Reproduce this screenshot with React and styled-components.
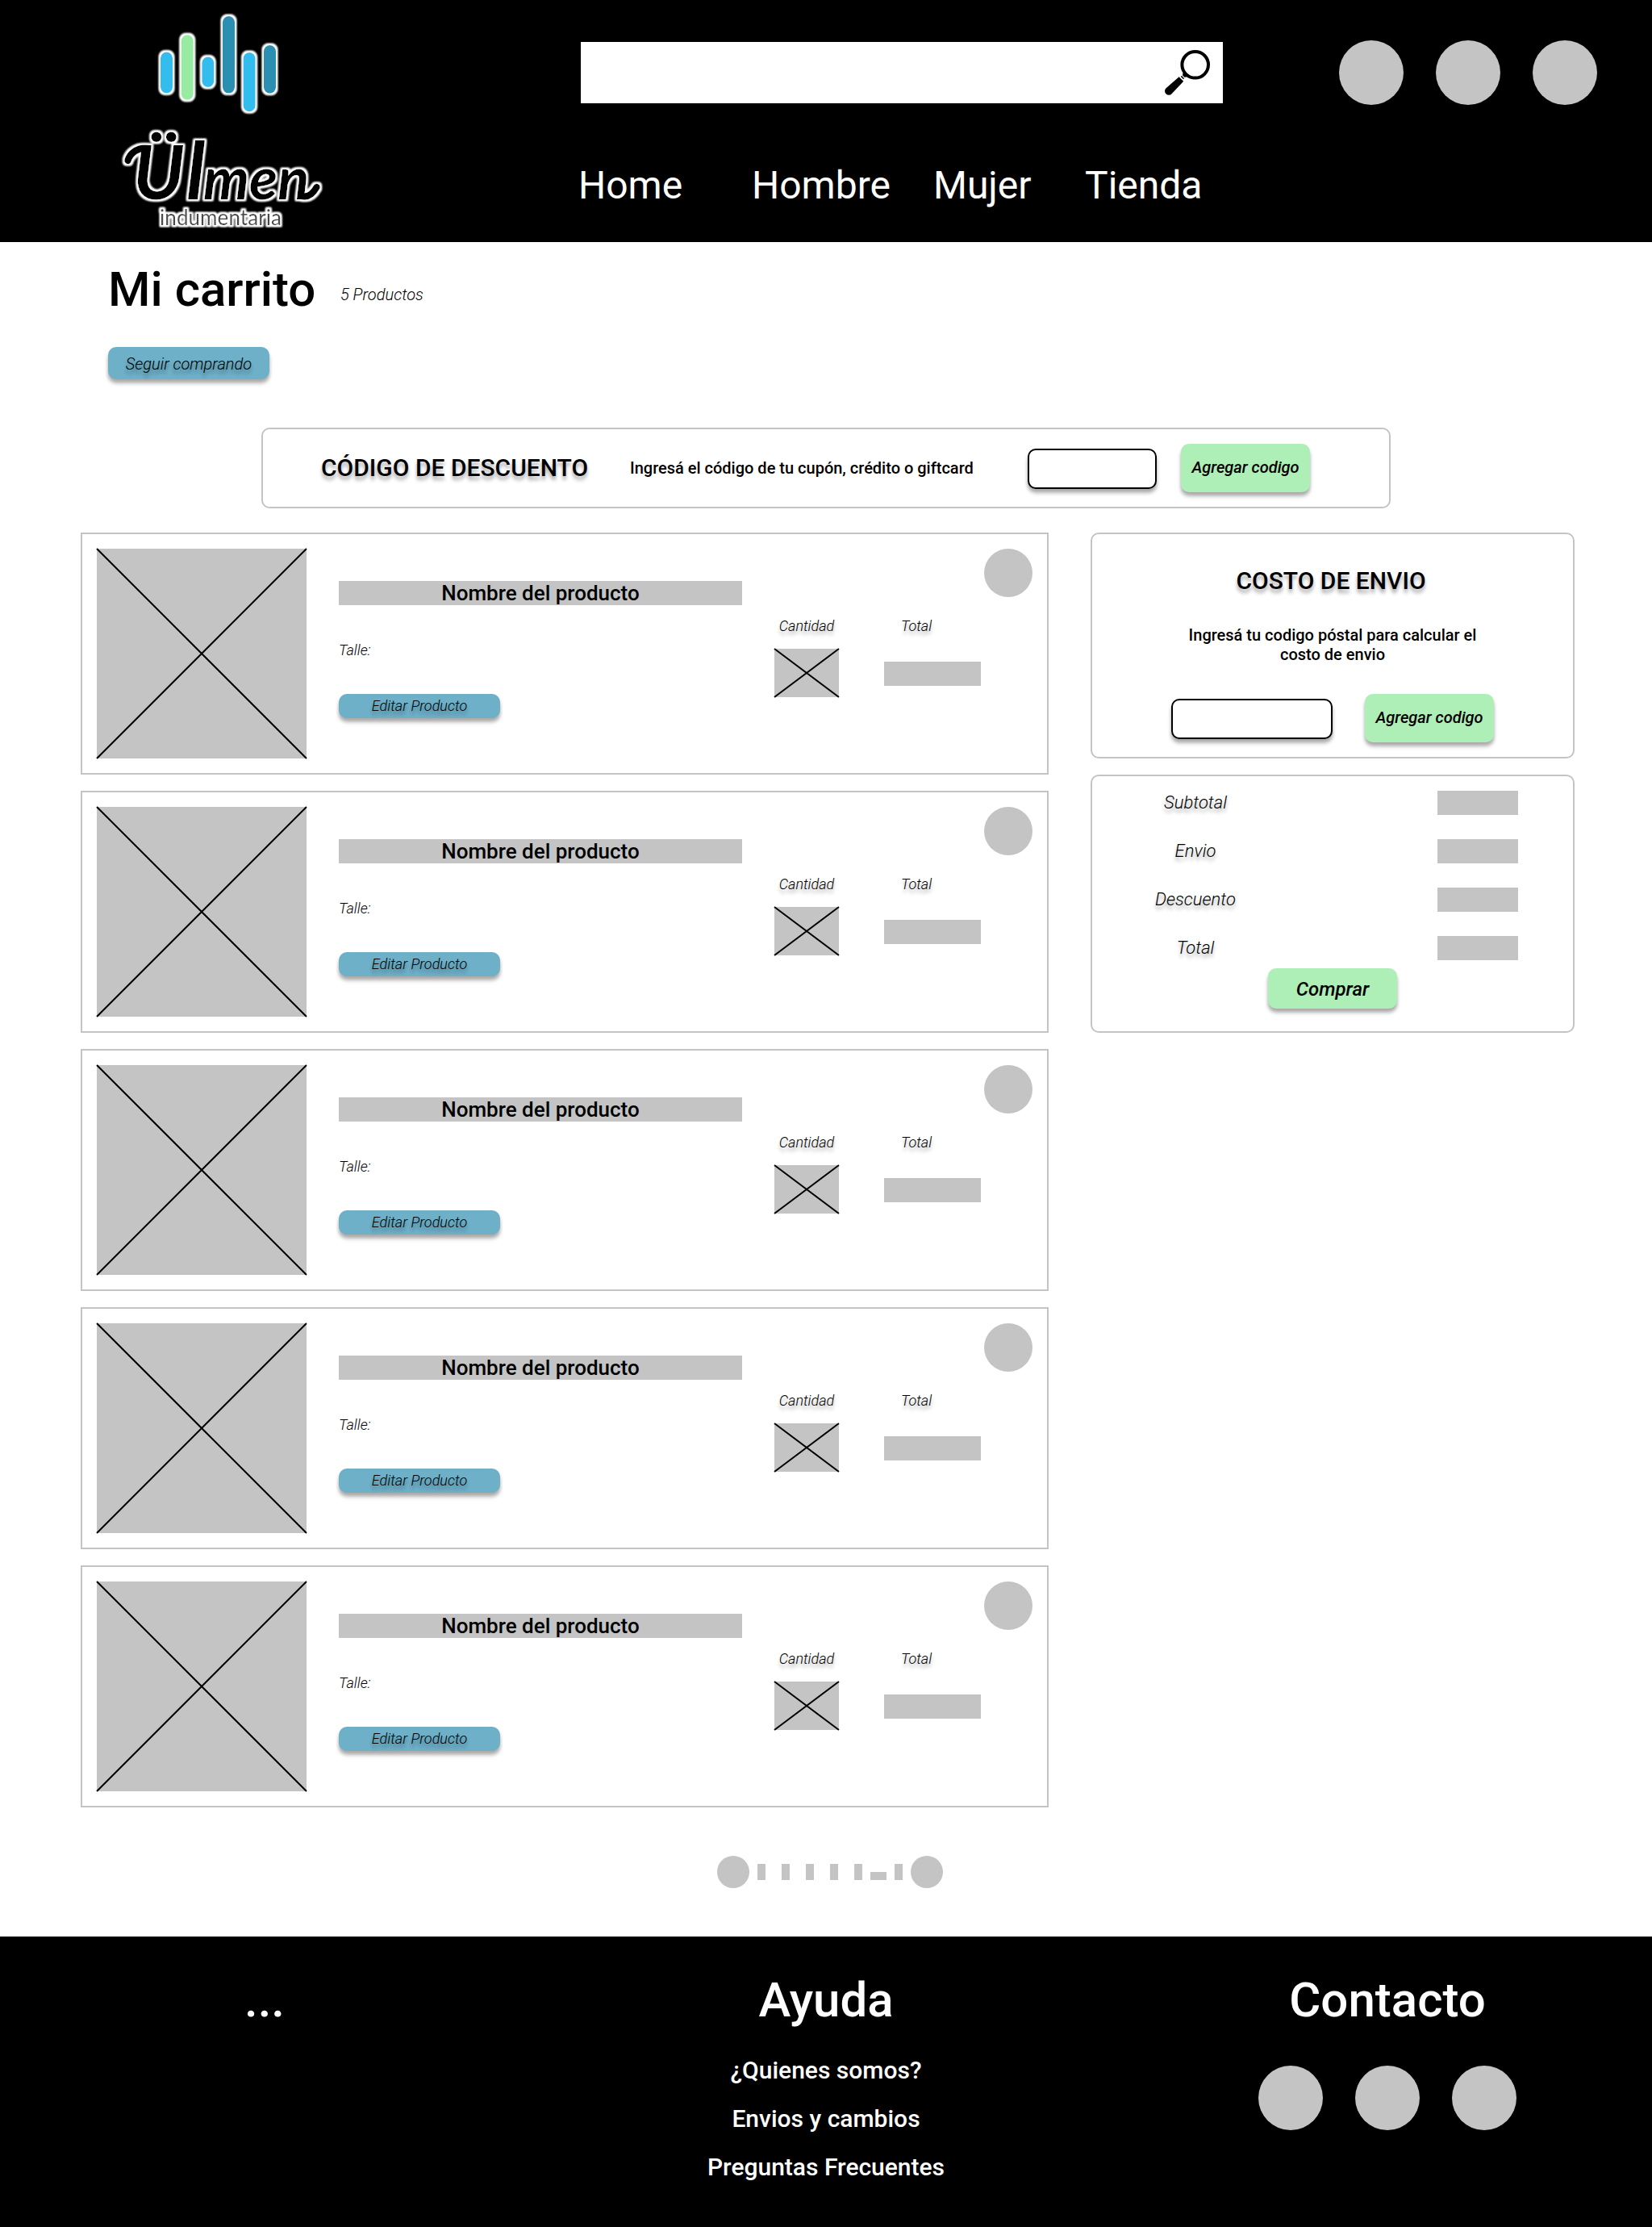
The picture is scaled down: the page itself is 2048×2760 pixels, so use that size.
import React from "react";
import styled, { createGlobalStyle } from "styled-components";

const Global = createGlobalStyle`
  *, *::before, *::after { box-sizing: border-box; }
  body { margin: 0; background: #fff; }
  button, input { font: inherit; color: inherit; border: 0; padding: 0; margin: 0; }
  h1, h2, p { margin: 0; font-weight: inherit; }
`;
const GREY = "#c4c4c4";
const SOFT = "0 4px 4px rgba(0, 0, 0, 0.25), 0 6px 5px rgba(0, 0, 0, 0.12)";

const Page = styled.div`
  width: 2048px;
  height: 2760px;
  display: flex;
  flex-direction: column;
  background: #fff;
  color: #000;
  font-family: Roboto, "Liberation Sans", sans-serif;
`;

const Header = styled.header`
  height: 300px;
  flex: none;
  display: flex;
  align-items: flex-start;
  padding: 0 68px 0 130px;
  background: #000;
  color: #fff;
`;
const HeaderCenter = styled.div`
  margin-left: 286px;
  padding-top: 52px;
  width: 800px;
`;
const SearchBar = styled.div`
  display: flex;
  justify-content: flex-end;
  align-items: center;
  width: 796px;
  height: 76px;
  margin-left: 4px;
  padding-right: 12px;
  background: #fff;
`;
const Nav = styled.nav`
  display: grid;
  grid-template-columns: 215px 225px 188px auto;
  margin: 74px 0 0 1px;
  font-size: 48px;
  line-height: 56px;
`;
const Circles = styled.div`
  display: flex;
  gap: 40px;
  margin-left: ${(p) => (p.$end ? "auto" : "0")};
  padding-top: ${(p) => p.$top}px;
`;
const Circle = styled.span`
  display: block;
  flex: none;
  width: ${(p) => p.$size}px;
  height: ${(p) => p.$size}px;
  border-radius: 50%;
  background: ${GREY};
`;

const Main = styled.main`
  height: 2100px;
  display: flex;
  flex-direction: column;
  padding: 24px 96px 0 100px;
`;
const TitleRow = styled.div`
  display: flex;
  align-items: flex-start;
  height: 70px;
  padding-left: 34px;
`;
const Title = styled.h1`
  width: 288px;
  font-size: 60px;
  line-height: 70px;
  font-weight: 500;
`;
const Count = styled.span`
  margin-top: 30px;
  font-size: 20px;
  line-height: 23px;
  font-weight: 300;
  font-style: italic;
`;
const BlueButton = styled.button`
  display: block;
  flex: none;
  width: 200px;
  height: ${(p) => p.$height}px;
  border-radius: 10px;
  background: #6db0c8;
  box-shadow: ${SOFT};
  font-size: ${(p) => p.$font}px;
  font-weight: 300;
  font-style: italic;
  text-align: center;
  text-shadow: ${SOFT};
`;
const KeepShopping = styled(BlueButton)`
  margin: 36px 0 0 34px;
  padding-top: 2px;
`;
const EditButton = styled(BlueButton)`
  padding-bottom: 1px;
`;
const GreenButton = styled.button`
  flex: none;
  width: 160px;
  height: ${(p) => p.$height}px;
  padding-bottom: 2px;
  border-radius: 10px;
  background: #aeefb7;
  box-shadow: ${SOFT};
  font-size: ${(p) => p.$font}px;
  font-weight: 500;
  font-style: italic;
  text-align: center;
`;
const Field = styled.input`
  flex: none;
  width: ${(p) => p.$width}px;
  height: 50px;
  && { margin-top: 2px; }
  border: 2px solid #000;
  border-radius: 10px;
  background: #fff;
  box-shadow: ${SOFT};
`;
const Panel = styled.section`
  border: 2px solid ${GREY};
  border-radius: 10px;
  background: #fff;
`;
const Discount = styled(Panel)`
  display: flex;
  align-items: center;
  width: 1400px;
  height: 100px;
  flex: none;
  margin: 60px 0 0 224px;
  padding-left: 72px;
`;
const Heading = styled.h2`
  font-size: 30px;
  line-height: 35px;
  font-weight: 500;
  text-shadow: ${SOFT};
`;
const DiscountHeading = styled(Heading)`
  width: 383px;
  padding-bottom: 2px;
`;
const Hint = styled.p`
  font-size: 20px;
  line-height: 23.5px;
  font-weight: 500;
`;
const DiscountHint = styled(Hint)`
  width: 493px;
  padding-top: 2px;
`;
const DiscountButton = styled(GreenButton)`
  margin-left: 30px;
`;

const Columns = styled.div`
  display: flex;
  gap: 52px;
  margin-top: 30px;
`;
const Products = styled.div`
  display: flex;
  flex-direction: column;
  gap: 20px;
`;
const Product = styled.article`
  display: flex;
  width: 1200px;
  height: 300px;
  border: 2px solid ${GREY};
  padding: 18px;
`;
const CrossSvg = styled.svg`
  display: block;
  flex: none;
  overflow: visible;
`;
const Details = styled.div`
  width: 500px;
  margin: 40px 0 0 40px;
`;
const ProductName = styled.div`
  height: 30px;
  background: ${GREY};
  font-size: 26px;
  line-height: 30px;
  font-weight: 500;
  text-align: center;
`;
const Size = styled.div`
  margin: 45px 0 44px;
  font-size: 18px;
  line-height: 21px;
  font-weight: 300;
  font-style: italic;
`;
const Stat = styled.div`
  display: flex;
  flex-direction: column;
  align-items: center;
  width: ${(p) => p.$width}px;
  margin: 85px 0 0 ${(p) => p.$left}px;
`;
const StatLabel = styled.span`
  margin-bottom: ${(p) => p.$gap}px;
  margin-right: ${(p) => p.$nudge || 0}px;
  font-size: 18px;
  line-height: 21px;
  font-weight: 300;
  font-style: italic;
  text-shadow: ${SOFT};
`;
const Block = styled.span`
  display: block;
  flex: none;
  width: ${(p) => p.$width}px;
  height: ${(p) => p.$height}px;
  background: ${GREY};
`;
const Remove = styled.div`
  margin-left: 4px;
`;

const Side = styled.aside`
  display: flex;
  flex-direction: column;
  gap: 20px;
  width: 600px;
`;
const Shipping = styled(Panel)`
  display: flex;
  flex-direction: column;
  align-items: center;
  height: 280px;
  padding-top: 40px;
  text-align: center;
`;
const ShippingHeading = styled(Heading)`
  margin-right: 4px;
`;
const ShippingHint = styled(Hint)`
  width: 380px;
  margin-top: 39px;
`;
const ShippingForm = styled.div`
  display: flex;
  align-items: center;
  gap: 40px;
  margin-top: 37px;
`;
const Summary = styled(Panel)`
  display: flex;
  flex-direction: column;
  align-items: center;
  height: 320px;
  padding-top: 18px;
`;
const SummaryRow = styled.div`
  display: flex;
  justify-content: space-between;
  width: 100%;
  height: 60px;
  padding: 0 68px 0 28px;
`;
const SummaryLabel = styled.span`
  width: 200px;
  font-size: 22px;
  line-height: 29px;
  font-weight: 300;
  font-style: italic;
  text-align: center;
  text-shadow: ${SOFT};
`;
const BuyButton = styled(GreenButton)`
  margin-top: -20px;
  padding: 1px 0 0;
`;

const Pagination = styled.div`
  display: flex;
  align-items: center;
  width: 280px;
  height: 40px;
  margin: 60px 0 0 789px;
`;
const Tick = styled(Block)`
  margin-left: ${(p) => p.$left}px;
  align-self: ${(p) => (p.$low ? "flex-end" : "center")};
  margin-bottom: ${(p) => (p.$low ? 10 : 0)}px;
`;
const NextPage = styled(Circle)`
  margin-left: 10px;
`;

const Footer = styled.footer`
  display: flex;
  height: 360px;
  padding-top: 44px;
  background: #000;
  color: #fff;
`;
const FooterColumn = styled.div`
  display: flex;
  flex-direction: column;
  align-items: center;
  width: ${(p) => p.$width}px;
`;
const FooterTitle = styled.h2`
  font-size: 60px;
  line-height: 70px;
  font-weight: 500;
`;
const FooterLinks = styled.div`
  display: flex;
  flex-direction: column;
  align-items: center;
  gap: 25px;
  margin-top: 34px;
  font-size: 30px;
  line-height: 35px;
  font-weight: 500;
`;

const BARS = [
  [199, 64.5, 51, "#33bdee"],
  [224.7, 43.3, 80.4, "#98eba3"],
  [250.3, 70.5, 37.4, "#33bdee"],
  [276, 20, 95.6, "#2b8fb1"],
  [301.6, 65, 73.2, "#33bdee"],
  [327, 56, 59.8, "#2b8fb1"],
];

function Logo() {
  return (
    <svg width="300" height="300" viewBox="130 0 300 300">
      <defs>
        <filter id="outline" x="-10%" y="-20%" width="120%" height="140%">
          <feMorphology in="SourceAlpha" operator="dilate" radius="2" result="fat" />
          <feGaussianBlur in="fat" stdDeviation="0.9" result="soft" />
          <feFlood floodColor="#fff" />
          <feComposite in2="soft" operator="in" result="ring" />
          <feMerge>
            <feMergeNode in="ring" />
            <feMergeNode in="ring" />
            <feMergeNode in="SourceGraphic" />
          </feMerge>
        </filter>
      </defs>
      <g filter="url(#outline)">
        {BARS.map(([x, y, h, fill]) => (
          <rect key={x} x={x} y={y} width="15" height={h} rx="7.5" fill={fill} />
        ))}
      </g>
      <g filter="url(#outline)" fontFamily="Lato, sans-serif" fontStyle="italic" fontWeight="700">
        {/* entry and exit flourishes of the wordmark */}
        <g fill="none" stroke="#000" strokeWidth="8.5" strokeLinecap="round">
          <path d="M158.500 199C161 190 171 182 183 184" />
          <path d="M374 243C382 245 388 240 392.500 232" />
        </g>
        <text y="247" fill="#000">
          <tspan x="165" fontSize="92">Ü</tspan>
          <tspan x="231" fontSize="98">l</tspan>
          <tspan x="252" fontSize="72">men</tspan>
        </text>
      </g>
      <g filter="url(#outline)">
        <text x="198" y="278.5" fontFamily="Lato, sans-serif" fontSize="26" fill="#4a4a4a" textLength="151">
          indumentaria
        </text>
      </g>
    </svg>
  );
}

function SearchIcon() {
  return (
    <svg width="60" height="60" viewBox="1444 60 60 60">
      <circle cx="1481.7" cy="80.3" r="16.3" fill="none" stroke="#000" strokeWidth="4" />
      <path d="M1466.3 91.2l1.6-2.6 5.4 5.4-2.8 1.6-2 .2-2.4-2.4z" />
      <path d="M1464.3 94.4l3.3 3.3" stroke="#000" strokeWidth="1.5" />
      <path d="M1461.6 95.2l5.6 5.6-14.6 15.4a4.9 4.9 0 0 1-7.3-6.6z" />
    </svg>
  );
}

function Cross({ width, height }) {
  return (
    <CrossSvg width={width} height={height}>
      <rect width={width} height={height} fill={GREY} />
      <path d={`M0 0L${width} ${height}M0 ${height}L${width} 0`} stroke="#000" strokeWidth="2" />
    </CrossSvg>
  );
}

function ProductCard() {
  return (
    <Product>
      <Cross width={260} height={260} />
      <Details>
        <ProductName>Nombre del producto</ProductName>
        <Size>Talle:</Size>
        <EditButton $height={30} $font={18}>Editar Producto</EditButton>
      </Details>
      <Stat $width={80} $left={40}>
        <StatLabel $gap={18}>Cantidad</StatLabel>
        <Cross width={80} height={60} />
      </Stat>
      <Stat $width={120} $left={56}>
        <StatLabel $gap={34} $nudge={40}>Total</StatLabel>
        <Block $width={120} $height={30} />
      </Stat>
      <Remove>
        <Circle $size={60} />
      </Remove>
    </Product>
  );
}

export default function App() {
  return (
    <Page>
      <Global />
      <Header>
        <Logo />
        <HeaderCenter>
          <SearchBar>
            <SearchIcon />
          </SearchBar>
          <Nav>
            <span>Home</span>
            <span>Hombre</span>
            <span>Mujer</span>
            <span>Tienda</span>
          </Nav>
        </HeaderCenter>
        <Circles $end $top={50}>
          <Circle $size={80} />
          <Circle $size={80} />
          <Circle $size={80} />
        </Circles>
      </Header>
      <Main>
        <TitleRow>
          <Title>Mi carrito</Title>
          <Count>5 Productos</Count>
        </TitleRow>
        <KeepShopping $height={40} $font={20}>Seguir comprando</KeepShopping>
        <Discount>
          <DiscountHeading>CÓDIGO DE DESCUENTO</DiscountHeading>
          <DiscountHint>Ingresá el código de tu cupón, crédito o giftcard</DiscountHint>
          <Field $width={160} />
          <DiscountButton $height={60} $font={20}>Agregar codigo</DiscountButton>
        </Discount>
        <Columns>
          <Products>
            {[1, 2, 3, 4, 5].map((n) => (
              <ProductCard key={n} />
            ))}
          </Products>
          <Side>
            <Shipping>
              <ShippingHeading>COSTO DE ENVIO</ShippingHeading>
              <ShippingHint>Ingresá tu codigo póstal para calcular el costo de envio</ShippingHint>
              <ShippingForm>
                <Field $width={200} />
                <GreenButton $height={60} $font={20}>Agregar codigo</GreenButton>
              </ShippingForm>
            </Shipping>
            <Summary>
              {["Subtotal", "Envio", "Descuento", "Total"].map((label) => (
                <SummaryRow key={label}>
                  <SummaryLabel>{label}</SummaryLabel>
                  <Block $width={100} $height={30} />
                </SummaryRow>
              ))}
              <BuyButton $height={50} $font={24}>Comprar</BuyButton>
            </Summary>
          </Side>
        </Columns>
        <Pagination>
          <Circle $size={40} />
          <Tick $width={10} $height={20} $left={10} />
          <Tick $width={10} $height={20} $left={20} />
          <Tick $width={10} $height={20} $left={20} />
          <Tick $width={10} $height={20} $left={20} />
          <Tick $width={10} $height={20} $left={20} />
          <Tick $width={20} $height={10} $left={10} $low />
          <Tick $width={10} $height={20} $left={10} />
          <NextPage $size={40} />
        </Pagination>
      </Main>
      <Footer>
        <FooterColumn $width={656}>
          <FooterTitle>...</FooterTitle>
        </FooterColumn>
        <FooterColumn $width={736}>
          <FooterTitle>Ayuda</FooterTitle>
          <FooterLinks>
            <span>¿Quienes somos?</span>
            <span>Envios y cambios</span>
            <span>Preguntas Frecuentes</span>
          </FooterLinks>
        </FooterColumn>
        <FooterColumn $width={656}>
          <FooterTitle>Contacto</FooterTitle>
          <Circles $top={46}>
            <Circle $size={80} />
            <Circle $size={80} />
            <Circle $size={80} />
          </Circles>
        </FooterColumn>
      </Footer>
    </Page>
  );
}
